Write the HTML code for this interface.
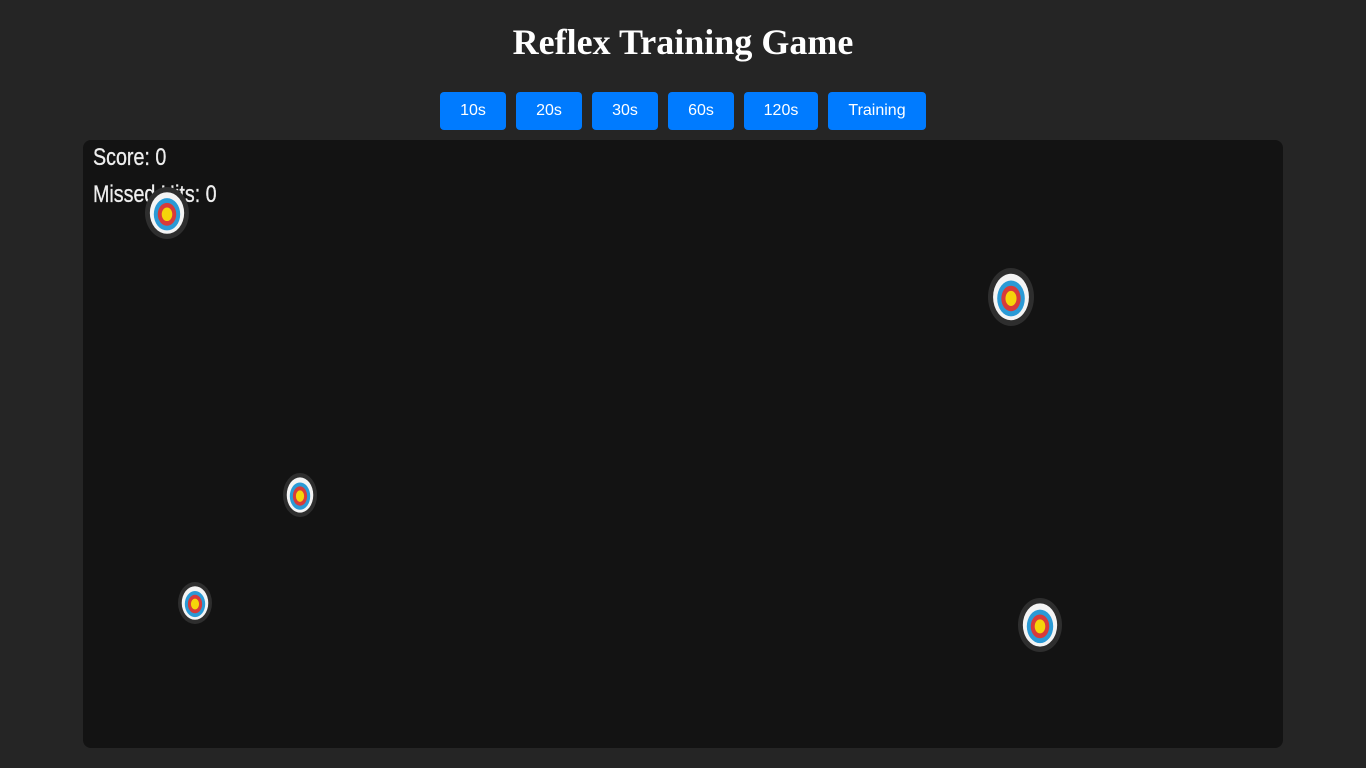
<!DOCTYPE html><html><head><style>
body{margin:0;background:#252525;width:1366px;height:768px;overflow:hidden;font-family:"Liberation Serif",serif}
h1{position:absolute;left:0;width:1366px;margin:0;text-align:center;top:21px;font-size:36px;color:#fff;font-weight:bold;line-height:42px}
.btn{position:absolute;top:92px;height:38px;background:#007bff;color:#fff;border-radius:4px;font:16px "Liberation Sans",sans-serif;line-height:38px;text-align:center}
#game{position:absolute;left:83px;top:140px;width:1200px;height:608px;background:#131313;border-radius:8px;overflow:hidden}
.t{position:absolute;left:10px;color:#eee;font:24px "Liberation Sans",sans-serif;transform:scaleX(0.82);transform-origin:left;white-space:nowrap;-webkit-text-stroke:0.3px #eee}
svg{position:absolute}
</style></head><body>
<h1>Reflex Training Game</h1>
<div class="btn" style="left:440px;width:66px">10s</div>
<div class="btn" style="left:516px;width:66px">20s</div>
<div class="btn" style="left:592px;width:66px">30s</div>
<div class="btn" style="left:668px;width:66px">60s</div>
<div class="btn" style="left:744px;width:74px">120s</div>
<div class="btn" style="left:828px;width:98px">Training</div>
<div id="game">
<div class="t" style="top:4px">Score: 0</div>
<div class="t" style="top:41px">Missed Hits: 0</div>
</div>
<svg width="1366" height="768" style="left:0;top:0">
<defs><g id="tg">
<ellipse cx="0" cy="0" rx="1" ry="1" fill="#2e2e2e"/>
<ellipse cx="0" cy="0" rx="0.78" ry="0.8" fill="#f4f4f4"/>
<ellipse cx="0" cy="0.05" rx="0.6" ry="0.62" fill="#2a9ad6"/>
<ellipse cx="0" cy="0.05" rx="0.42" ry="0.44" fill="#d83a3a"/>
<ellipse cx="0" cy="0.05" rx="0.24" ry="0.26" fill="#f5d50a"/>
</g></defs>
<use href="#tg" transform="translate(167,213) scale(22,26)"/>
<use href="#tg" transform="translate(1011,297) scale(23,29)"/>
<use href="#tg" transform="translate(300,495) scale(17,22)"/>
<use href="#tg" transform="translate(195,603) scale(17,21)"/>
<use href="#tg" transform="translate(1040,625) scale(22,27)"/>
</svg>
</body></html>
